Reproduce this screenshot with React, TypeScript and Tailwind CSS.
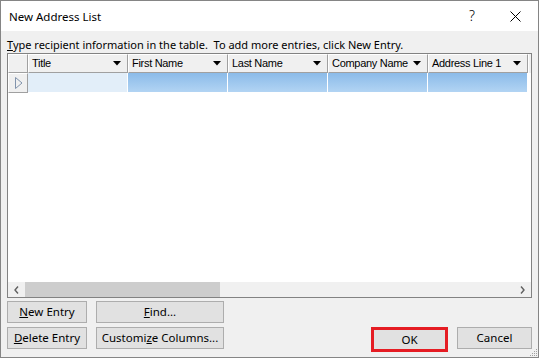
import React from "react";

const columns = ["Title", "First Name", "Last Name", "Company Name", "Address Line 1"];

function DropArrow() {
  return (
    <svg width="8" height="5" viewBox="0 0 8 5" className="shrink-0">
      <path d="M0 0H8L4 4.5Z" fill="#000" />
    </svg>
  );
}

function WinButton({ children, className = "" }: { children: React.ReactNode; className?: string }) {
  return (
    <button
      className={`h-[22px] bg-[#e1e1e1] border border-[#adadad] text-[11.5px] text-black flex items-center justify-center leading-none ${className}`}
    >
      {children}
    </button>
  );
}

export default function App() {
  return (
    <div className="w-[539px] h-[358px] border border-[#858585] bg-[#f0f0f0] flex flex-col font-['Noto_Sans',sans-serif] text-black overflow-hidden relative">
      {/* title bar */}
      <div className="h-[30px] bg-white flex items-center shrink-0">
        <span className="pl-[8px] text-[11.5px] pt-[1px]">New Address List</span>
        <span className="ml-auto text-[14px] font-light w-[20px] text-center mr-[28px] pb-[1px]">?</span>
        <svg width="11" height="11" viewBox="0 0 11 11" className="mr-[17px]">
          <path d="M0.5 0.5L10.5 10.5M10.5 0.5L0.5 10.5" stroke="#000" strokeWidth="1" />
        </svg>
      </div>

      <div className="flex-1 flex flex-col px-[6px]">
        <div className="pt-[6px] h-[22px] text-[11px] leading-[15px] whitespace-nowrap">
          <span className="underline">T</span>ype recipient information in the table.&nbsp; To add more entries, click New Entry.
        </div>

        {/* grid */}
        <div className="w-[525px] h-[245px] border border-[#828282] bg-white flex flex-col font-['Liberation_Sans',sans-serif] text-[11px] tracking-[-0.3px]">
          <div className="flex h-[19px] shrink-0">
            <div className="w-[20px] bg-[#f0f0f0] border-t border-l border-white border-r border-b border-r-[#a0a0a0] border-b-[#a0a0a0]" />
            {columns.map((c) => (
              <div
                key={c}
                className="w-[100px] bg-[#f0f0f0] border-t border-l border-white border-r border-b border-r-[#a0a0a0] border-b-[#a0a0a0] flex items-center pl-[3px] pr-[6px]"
              >
                <span className="flex-1 whitespace-nowrap">{c}</span>
                <DropArrow />
              </div>
            ))}
            <div className="flex-1 bg-[#f0f0f0] border-l border-white" />
          </div>
          <div className="flex h-[20px] shrink-0">
            <div className="w-[20px] bg-[#f0f0f0] border-t border-l border-white border-r border-b border-r-[#a0a0a0] border-b-[#a0a0a0] flex items-center pl-[6px]">
              <svg width="8" height="12" viewBox="0 0 8 12">
                <path d="M0.5 0.5L7 6L0.5 11.5Z" fill="none" stroke="#8193ac" strokeWidth="1" />
              </svg>
            </div>
            <div className="w-[100px] bg-[#e2eef9] border-r border-b border-white" />
            {columns.slice(1).map((c) => (
              <div key={c} className="w-[100px] bg-gradient-to-b from-[#8bbbe9] to-[#b2d4f3] border-r border-b border-white" />
            ))}
            <div className="flex-1" />
          </div>
          <div className="flex-1" />
          {/* horizontal scrollbar */}
          <div className="h-[15px] bg-[#f0f0f0] flex items-center shrink-0">
            <div className="w-[17px] h-full flex items-center justify-center">
              <svg width="5" height="8" viewBox="0 0 5 8">
                <path d="M4 0.5L1 4L4 7.5" fill="none" stroke="#606060" strokeWidth="1.4" />
              </svg>
            </div>
            <div className="w-[195px] h-full bg-[#cdcdcd]" />
            <div className="flex-1" />
            <div className="w-[17px] h-full flex items-center justify-center">
              <svg width="5" height="8" viewBox="0 0 5 8">
                <path d="M1 0.5L4 4L1 7.5" fill="none" stroke="#606060" strokeWidth="1.4" />
              </svg>
            </div>
          </div>
        </div>

        {/* buttons */}
        <div className="flex mt-[3px]">
          <div className="flex flex-col gap-[4px] w-[80px]">
            <WinButton className="w-[80px]">
              <span className="underline">N</span>ew Entry
            </WinButton>
            <WinButton className="w-[80px]">
              <span className="underline">D</span>elete Entry
            </WinButton>
          </div>
          <div className="flex flex-col gap-[4px] ml-[9px]">
            <WinButton className="w-[128px]">
              <span className="underline">F</span>ind...
            </WinButton>
            <WinButton className="w-[128px]">
              Customi<span className="underline">z</span>e Columns...
            </WinButton>
          </div>
          <div className="ml-auto flex items-start gap-[9px] mt-[26px]">
            <button className="w-[77px] h-[25px] border-[3px] border-[#e51c23] bg-[#e1e1e1] text-[11.5px] flex items-center justify-center leading-none">
              OK
            </button>
            <WinButton className="w-[75px]">Cancel</WinButton>
          </div>
        </div>
      </div>

      {/* resize grip */}
      <svg width="9" height="9" viewBox="0 0 9 9" className="absolute right-0 bottom-0">
        {[
          [7, 1],
          [5, 3],
          [7, 3],
          [3, 5],
          [5, 5],
          [7, 5],
          [1, 7],
          [3, 7],
          [5, 7],
          [7, 7],
        ].map(([x, y], i) => (
          <rect key={i} x={x} y={y} width="1" height="1" fill="#a0a0a0" />
        ))}
      </svg>
    </div>
  );
}
